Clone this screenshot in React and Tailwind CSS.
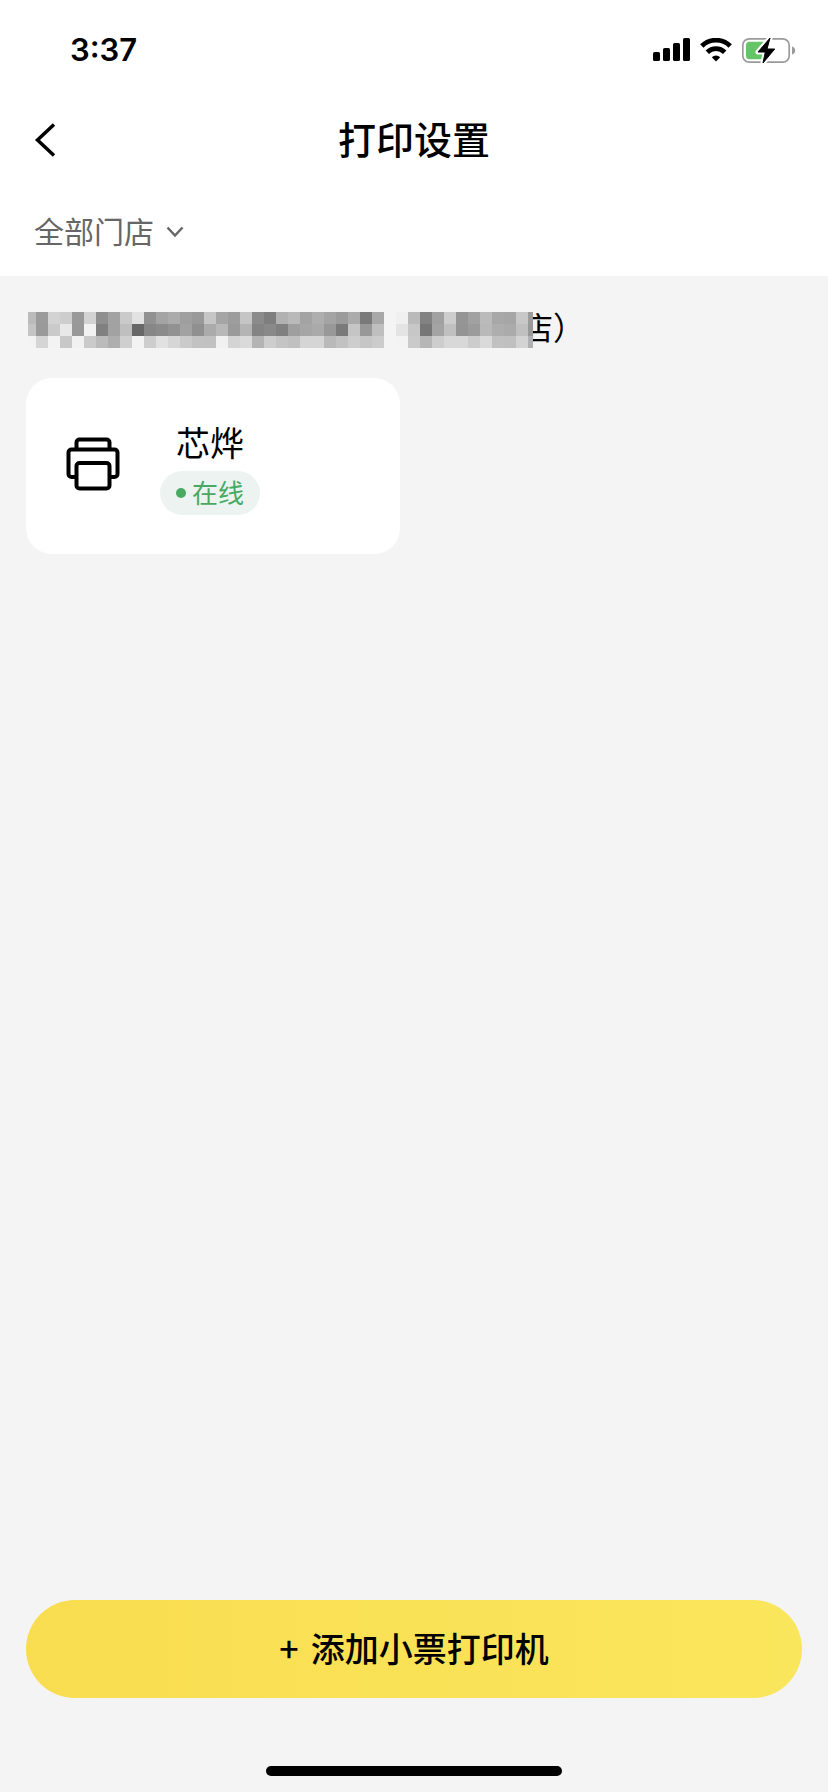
const shopMosaic = [
  {
    x: 24,
    rows: [
      'bb 9b d3 cd 99 d3 8f a2 ca e2 91 a4 ab 9f 99 c6 a5 9d c5 8b 7e b1 b9 a3 ae a4 9b ab 7a a8',
      'c4 9a ca e8 98 f2 80 a2 bf 68 87 8b 92 a2 90 ab b8 9a b4 84 89 80 9f a6 aa 98 7a c5 98 bf',
      'f3 d5 f3 c8 f1 ca bb ae cf f3 cd e1 d6 ca c2 c1 f1 d4 da b4 cd c4 c0 d5 d5 b9 c2 cd c6 cc',
    ],
  },
  {
    x: 396,
    rows: [
      'f0 ba 82 a1 cd 95 a1 bb a8 a6 c8 9c',
      'e4 c7 76 a4 c0 94 9b b9 ae ab c0 99',
      'f3 ca b6 cd d8 d8 cc da c1 c0 d3 b0',
    ],
  },
];

const printers = [{ id: 1, name: '芯烨', status: '在线' }];

function SignalIcon() {
  return (
    <svg width="37" height="24" viewBox="0 0 37 24" fill="#000">
      <rect x="0" y="14" width="7" height="9" rx="1.6" />
      <rect x="10" y="10" width="7" height="13" rx="1.6" />
      <rect x="20" y="5" width="7" height="18" rx="1.6" />
      <rect x="30" y="0" width="7" height="23" rx="1.6" />
    </svg>
  );
}

function WifiIcon() {
  return (
    <svg width="32" height="24" viewBox="0 0 32 24" fill="none" stroke="#000" strokeWidth="4.8">
      <path d="M1.8 8a20.3 20.3 0 0 1 28.4 0" />
      <path d="M7.3 14.200a12.4 12.4 0 0 1 17.4 0" />
      <path d="M16 23.6l-4.2-4.3a6 6 0 0 1 8.4 0z" fill="#000" stroke="none" />
    </svg>
  );
}

function BatteryIcon() {
  const bolt = 'M28 1L16 15h7.3L21 26l11.7-14H25z';
  return (
    <svg width="54" height="27" viewBox="0 0 54 27">
      <rect x="0.8" y="1.8" width="46.4" height="23.4" rx="6.5" fill="none" stroke="#9b9b9d" strokeWidth="1.7" />
      <path d="M50 9.5c2 .6 3.2 2 3.2 4s-1.2 3.4-3.2 4z" fill="#9b9b9d" />
      <path d="M7.5 4.8H22V22.2H7.5a3.5 3.5 0 0 1-3.5-3.5V8.3a3.5 3.5 0 0 1 3.5-3.5z" fill="#65c466" />
      <path d={bolt} fill="#fff" stroke="#fff" strokeWidth="5" strokeLinejoin="round" />
      <path d={bolt} fill="#000" stroke="#000" strokeWidth="1" strokeLinejoin="round" />
    </svg>
  );
}

function PrinterIcon() {
  return (
    <svg className="mb-1" width="54" height="54" viewBox="0 0 54 54" fill="none" stroke="#000" strokeWidth="4" strokeLinejoin="round">
      <path d="M10.5 12V5.5a3 3 0 0 1 3-3h27a3 3 0 0 1 3 3V12" />
      <path d="M10.5 40H5.5a3 3 0 0 1-3-3V15.5a3 3 0 0 1 3-3h43a3 3 0 0 1 3 3V37a3 3 0 0 1-3 3H43.5" />
      <rect x="10.5" y="26" width="33" height="25.5" rx="3" />
    </svg>
  );
}

function ShopMosaic() {
  return (
    <svg className="relative shrink-0 -mr-3" width="505" height="36" viewBox="28 0 505 36" shapeRendering="crispEdges">
      {shopMosaic.map((block) =>
        block.rows.map((row, r) =>
          row.split(' ').map((v, c) => (
            <rect key={`${block.x}-${r}-${c}`} x={block.x + c * 12} y={r * 12} width="12" height="12" fill={`#${v}${v}${v}`} />
          ))
        )
      )}
    </svg>
  );
}

export default function App() {
  return (
    <div className="min-h-screen flex flex-col bg-[#f4f4f4] text-black font-['Noto_Sans_CJK_SC',sans-serif]">
      <header className="bg-white">
        <div className="h-[100px] flex items-center justify-between pl-[70px] pr-8">
          <span className="font-['Inter',sans-serif] text-[31px] leading-10 font-semibold">3:37</span>
          <div className="flex items-center gap-[10px]">
            <SignalIcon />
            <WifiIcon />
            <BatteryIcon />
          </div>
        </div>

        <div className="h-20 grid grid-cols-[1fr_auto_1fr] items-center px-[34px]">
          <button type="button" aria-label="返回" className="justify-self-start">
            <svg width="22" height="34" viewBox="0 0 22 34" fill="none" stroke="#000" strokeWidth="3.5">
              <path d="M20 1.5L3.500 17L20 32.5" />
            </svg>
          </button>
          <h1 className="pb-1 text-[38px] leading-[56px] font-medium">打印设置</h1>
        </div>

        <div className="h-24 flex items-center px-[34px] pt-2">
          <button type="button" className="flex items-center gap-3 text-[30px] leading-10 text-[#666]">
            <span className="pb-1">全部门店</span>
            <svg width="18" height="12" viewBox="0 0 18 12" fill="none" stroke="#666" strokeWidth="2.5">
              <path d="M1.5 1.5L9 9.5L16.5 1.5" />
            </svg>
          </button>
        </div>
      </header>

      <main className="flex-1 px-[26px] pt-[34px]">
        <h2 className="flex items-center pl-[2px] h-10 text-[32px] leading-10">
          <ShopMosaic />
          <span className="pb-2">店）</span>
        </h2>

        <ul className="grid grid-cols-2 gap-7 mt-7">
          {printers.map((printer) => (
            <li key={printer.id} className="h-44 flex items-center gap-10 rounded-[26px] bg-white pl-10">
              <PrinterIcon />
              <div className="flex flex-col items-center gap-[7px] pt-[3px]">
                <span className="text-[34px] leading-[44px]">{printer.name}</span>
                <span className="h-11 flex items-center gap-[6px] rounded-full bg-[#ecf3f1] px-4 text-[26px] text-[#48aa62]">
                  <i className="size-[10px] rounded-full bg-[#48aa62]" />
                  <span className="pb-1">{printer.status}</span>
                </span>
              </div>
            </li>
          ))}
        </ul>
      </main>

      <footer className="flex flex-col items-center px-[26px] pb-4">
        <button
          type="button"
          className="w-full h-[98px] flex items-center justify-center gap-3 rounded-full bg-linear-to-r from-[#f9dd50] to-[#fae65c] pb-1 text-[34px] font-medium"
        >
          <span>+</span>
          <span>添加小票打印机</span>
        </button>
        <div className="mt-[68px] w-[296px] h-[10px] rounded-full bg-black" />
      </footer>
    </div>
  );
}
